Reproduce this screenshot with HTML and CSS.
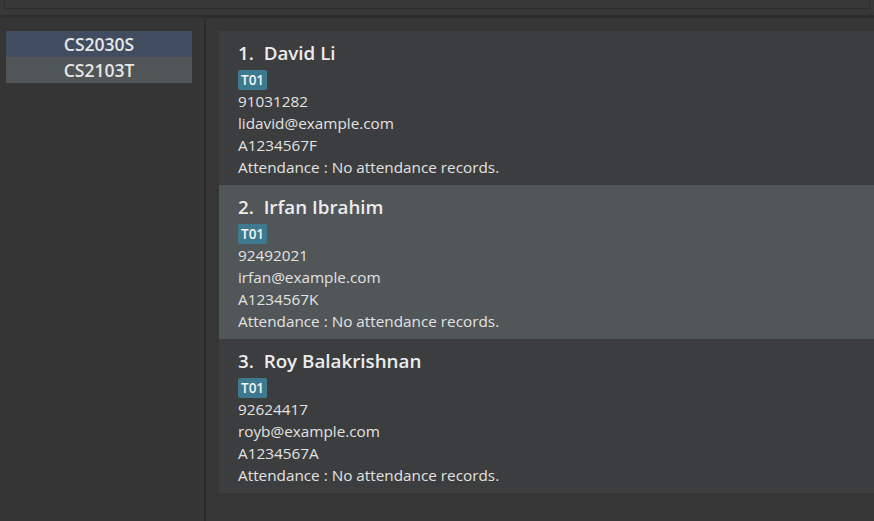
FILE: index.html
```html
<!DOCTYPE html>
<html>
<head>
<meta charset="utf-8">
<link rel="stylesheet" href="styles.css">
</head>
<body>
<div class="topbar">
  <div class="topbox"></div>
  <div class="topline"></div>
</div>
<div class="main">
  <aside class="side">
    <ul class="modules">
      <li class="mod selected">CS2030S</li>
      <li class="mod">CS2103T</li>
    </ul>
  </aside>
  <div class="divider"></div>
  <section class="content">
    <div class="card">
      <div class="name">1.&nbsp;&nbsp;David Li</div>
      <span class="tag">T01</span>
      <div class="line">91031282</div>
      <div class="line">lidavid@example.com</div>
      <div class="line">A1234567F</div>
      <div class="line">Attendance : No attendance records.</div>
    </div>
    <div class="card active">
      <div class="name">2.&nbsp;&nbsp;Irfan Ibrahim</div>
      <span class="tag">T01</span>
      <div class="line">92492021</div>
      <div class="line">irfan@example.com</div>
      <div class="line">A1234567K</div>
      <div class="line">Attendance : No attendance records.</div>
    </div>
    <div class="card">
      <div class="name">3.&nbsp;&nbsp;Roy Balakrishnan</div>
      <span class="tag">T01</span>
      <div class="line">92624417</div>
      <div class="line">royb@example.com</div>
      <div class="line">A1234567A</div>
      <div class="line">Attendance : No attendance records.</div>
    </div>
  </section>
</div>
</body>
</html>
```

FILE: styles.css
```css
* { box-sizing: border-box; }
html, body {
  margin: 0;
  padding: 0;
  height: 100%;
  overflow: hidden;
}
body {
  background: #363636;
  font-family: "Open Sans", "Noto Sans", sans-serif;
  color: #e6e6e6;
}
.topbar {
  height: 18px;
  background: #383838;
  display: flex;
  flex-direction: column;
}
.topbox {
  height: 9px;
  margin: 0 4px;
  background: #383838;
  border: 1px solid #2e2e2e;
  border-top: none;
}
.topline {
  margin-top: 6px;
  height: 3px;
  background: #2d2d2d;
}
.main {
  display: flex;
  height: calc(100% - 18px);
}
.side {
  width: 204px;
  flex: none;
  background: #353535;
  padding: 13px 12px 0 6px;
}
.modules {
  list-style: none;
  margin: 0;
  padding: 0;
}
.mod {
  height: 26px;
  line-height: 26px;
  text-align: center;
  font-size: 17.5px;
  font-weight: 600;
  color: #e6e6e6;
  background: #505557;
}
.mod.selected {
  background: #424c61;
}
.divider {
  width: 2px;
  flex: none;
  background: #2b2b2b;
}
.content {
  flex: 1;
  background: #363636;
  padding: 13px 0 0 13px;
  overflow: hidden;
}
.card {
  height: 154px;
  background: #3c3d3f;
  padding: 10px 0 0 19px;
}
.card.active {
  background: #515658;
}
.name {
  font-size: 18.8px;
  font-weight: 600;
  color: #ececec;
  height: 27px;
  line-height: 25px;
}
.tag {
  display: inline-block;
  background: #3e7a8f;
  color: #f4f4f4;
  font-size: 13.5px;
  font-weight: 600;
  height: 20px;
  line-height: 20px;
  padding: 0 3px;
  border-radius: 2px;
}
.line {
  font-size: 15.3px;
  line-height: 22px;
  color: #e2e2e2;
  white-space: nowrap;
}
```
